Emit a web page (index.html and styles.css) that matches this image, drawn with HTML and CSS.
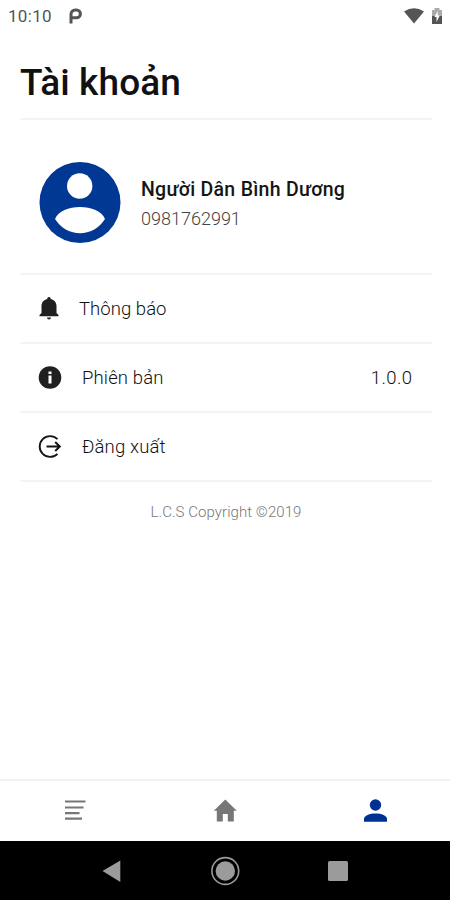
FILE: index.html
```html
<!DOCTYPE html>
<html lang="vi">
<head>
<meta charset="utf-8">
<title>Tài khoản</title>
<link rel="stylesheet" href="styles.css">
</head>
<body>
<div class="screen">
  <header class="status">
    <span class="time">10:10</span>
    <svg class="carrier" width="13" height="16" viewBox="0 0 13 16"><path d="M2 15.500V6.500A4.300 4.300 0 0 1 6.300 2H7.500a3.800 3.800 0 0 1 0 7.800H2.500" fill="none" stroke="#555" stroke-width="3"/></svg>
    <svg class="wifi" width="20" height="16" viewBox="0 0 20 16"><path d="M0 3.500Q10-3 20 3.500L10 15.500Z" fill="#555"/></svg>
    <svg class="battery" width="10" height="16" viewBox="0 0 10 16"><path d="M0 2h2.500V0h5v2H10v7H0z" fill="#aaa"/><path d="M0 8h10v8H0z" fill="#555"/><path d="M5.800 3L2.500 9H4.500V14L7.800 7.500H5.800z" fill="#fff"/></svg>
  </header>
  <main class="content">
    <h1 class="title"><span>Tài khoản</span></h1>
    <section class="profile">
      <svg class="avatar" width="82" height="82" viewBox="0 0 82 82"><circle cx="41" cy="40.500" r="40.500" fill="#013893"/><circle cx="40.700" cy="24" r="12.700" fill="#fff"/><path d="M16 57C22 41 60 41 66 57C54 76 28 76 16 57Z" fill="#fff"/></svg>
      <div class="who">
        <span class="name">Người Dân Bình Dương</span>
        <span class="phone">0981762991</span>
      </div>
    </section>
    <div class="row row-bell">
      <svg width="20" height="23" viewBox="0 0 20 23"><path d="M10 0a1.700 1.700 0 0 0-1.700 1.900C4.500 2.800 2.500 5.500 2.500 9v7L.5 18v1.200h19V18L17.500 16V9c0-3.500-2-6.200-5.800-7.100A1.700 1.700 0 0 0 10 0ZM8 20.500h4a2 2 0 0 1-4 0Z" fill="#202020"/></svg>
      <span class="label bell">Thông báo</span>
    </div>
    <div class="row">
      <svg width="24" height="24" viewBox="0 0 24 24"><circle cx="12" cy="11.500" r="11.300" fill="#202020"/><path d="M10.500 5.500h3v2.500h-3zM10.500 9.500h3v8h-3z" fill="#fff"/></svg>
      <span class="label version">Phiên bản</span>
      <span class="value">1.0.0</span>
    </div>
    <div class="row">
      <svg width="24" height="24" viewBox="0 0 24 24"><path d="M19.500 4.200A10.400 10.400 0 1 0 19.500 18.800" fill="none" stroke="#151515" stroke-width="1.900"/><path d="M8.500 11.500H21.500M17.200 7L21.800 11.500L17.200 16" fill="none" stroke="#151515" stroke-width="2"/></svg>
      <span class="label logout">Đăng xuất</span>
    </div>
    <p class="copyright"><span>L.C.S Copyright ©2019</span></p>
  </main>
  <nav class="tabs">
    <svg width="24" height="24" viewBox="0 0 24 24"><path d="M2 2.500h20.500M2 8.500h18.500M2 14.200h14.500M2 19.700h17" fill="none" stroke="#777" stroke-width="2.200"/></svg>
    <svg width="24" height="24" viewBox="0 0 24 24"><path d="M12.300 .5L23.800 11.800H20.800V22.500H14.800V15H9.800V22.500H3.800V11.800H.8Z" fill="#777"/></svg>
    <svg width="24" height="24" viewBox="0 0 24 24"><circle cx="12.500" cy="6" r="5.700" fill="#013093"/><path d="M1 22.700V20C1 12.500 24 12.500 24 20v2.700Z" fill="#013093"/></svg>
  </nav>
  <footer class="system">
    <svg width="30" height="30" viewBox="0 0 30 30"><path d="M5.500 15L23.300 4.500V26Z" fill="#9b9b9b"/></svg>
    <svg width="30" height="30" viewBox="0 0 30 30"><circle cx="15.300" cy="15" r="13.400" fill="none" stroke="#9b9b9b" stroke-width="1.600"/><circle cx="15.300" cy="15" r="9.700" fill="#9b9b9b"/></svg>
    <svg width="30" height="30" viewBox="0 0 30 30"><rect x="5" y="5" width="20" height="20" rx="1.500" fill="#9b9b9b"/></svg>
  </footer>
</div>
</body>
</html>
```
FILE: styles.css
```css
* { box-sizing: border-box; }
body { margin: 0; background: #fff; font-family: Roboto, sans-serif; }
svg { display: block; flex: none; }
.screen { width: 450px; height: 900px; display: flex; flex-direction: column; overflow: hidden; }
.status { height: 32px; padding: 0 8px 0 8px; display: flex; align-items: center; color: #555; }
.time { width: 61px; font-size: 17px; letter-spacing: .3px; }
.wifi { margin-left: auto; margin-right: 8px; }
.content { flex: 1; padding: 0 18px 0 20px; }
.title { height: 88px; margin: 0; padding-top: 29px; border-bottom: 2px solid #f4f4f4; font-size: 37px; letter-spacing: .1px; line-height: 44px; font-weight: 500; color: #111; }
.profile { height: 155px; padding: 42px 0 0 19px; display: flex; gap: 20px; border-bottom: 2px solid #f4f4f4; }
.who { display: flex; flex-direction: column; padding-top: 15px; }
.name { font-size: 19.500px; letter-spacing: .28px; line-height: 26px; font-weight: 500; color: #151515; white-space: nowrap; align-self: flex-start; }
.phone { font-size: 18px; line-height: 32px; font-weight: 300; color: #444; align-self: flex-start; }
.row { height: 69px; padding: 0 20px 0 18px; display: flex; align-items: center; gap: 20px; border-bottom: 2px solid #f4f4f4; font-size: 18.500px; font-weight: 300; color: #111; }
.row-bell { padding-left: 19px; }
.bell { letter-spacing: .05px; }
.version, .logout { letter-spacing: .15px; }
.value { margin-left: auto; letter-spacing: .4px; margin-right: -.4px; }
.copyright { margin: 19px 0 0; text-align: center; font-size: 15px; letter-spacing: .06px; line-height: 22px; font-weight: 300; color: #777; }
.tabs { height: 62px; border-top: 2px solid #f2f2f2; display: flex; justify-content: space-around; align-items: center; }
.system { height: 59px; padding: 0 56px; background: #000; display: flex; justify-content: space-around; align-items: center; }
```
